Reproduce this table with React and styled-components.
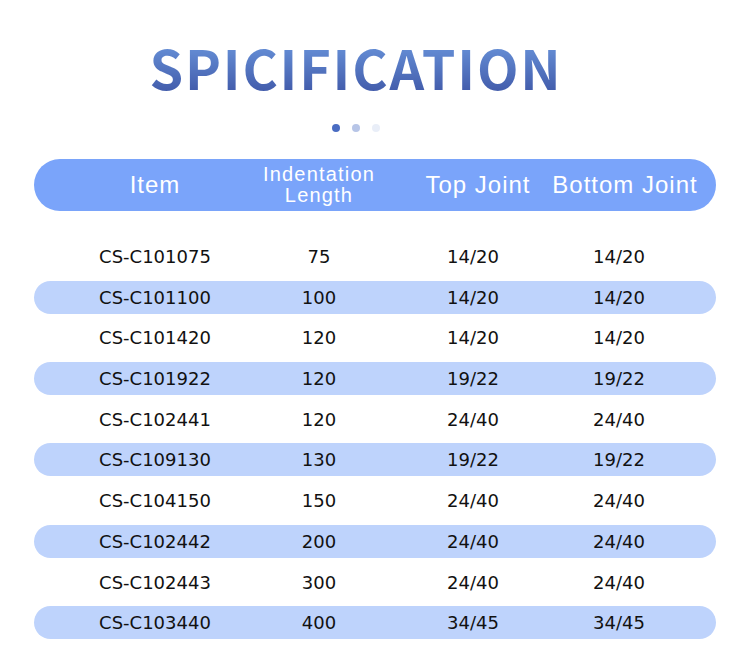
import React from 'react'
import styled, { createGlobalStyle } from 'styled-components'

const GlobalStyle = createGlobalStyle`
  body {
    margin: 0;
    background: #ffffff;
  }
`

const rows = [
  ['CS-C101075', '75', '14/20', '14/20'],
  ['CS-C101100', '100', '14/20', '14/20'],
  ['CS-C101420', '120', '14/20', '14/20'],
  ['CS-C101922', '120', '19/22', '19/22'],
  ['CS-C102441', '120', '24/40', '24/40'],
  ['CS-C109130', '130', '19/22', '19/22'],
  ['CS-C104150', '150', '24/40', '24/40'],
  ['CS-C102442', '200', '24/40', '24/40'],
  ['CS-C102443', '300', '24/40', '24/40'],
  ['CS-C103440', '400', '34/45', '34/45'],
]

const App = () => {
  return (
    <Page>
      <GlobalStyle />
      <Title>SPICIFICATION</Title>
      <Dots>
        <Dot $color='#4a6cc2' />
        <Dot $color='#b7c5e7' />
        <Dot $color='#e9eef8' />
      </Dots>
      <Table>
        <HeadRow>
          <HeadCell>Item</HeadCell>
          <HeadCell $small>
            Indentation
            <br />
            Length
          </HeadCell>
          <HeadCell $shift='5px'>Top Joint</HeadCell>
          <HeadCell $shift='6px'>Bottom Joint</HeadCell>
        </HeadRow>
        <Body>
          {rows.map((item, itemIndex) => (
            <Row key={itemIndex} $striped={itemIndex % 2 === 1}>
              {item.map((cell, cellIndex) => (
                <Cell key={cellIndex}>{cell}</Cell>
              ))}
            </Row>
          ))}
        </Body>
      </Table>
    </Page>
  )
}

const Page = styled.div`
  width: 750px;
  height: 670px;
  padding-top: 37px;
  box-sizing: border-box;
  overflow: hidden;
`

const Title = styled.h1`
  margin: 0 38px 0 0;
  text-align: center;
  font-family: 'Noto Sans CJK SC', 'Noto Sans', sans-serif;
  font-weight: 700;
  font-size: 54px;
  line-height: 60px;
  letter-spacing: 1.8px;
  background: linear-gradient(180deg, #6c98de 0%, #3e56a6 100%);
  -webkit-background-clip: text;
  background-clip: text;
  color: transparent;
`

const Dots = styled.div`
  display: flex;
  justify-content: center;
  gap: 12px;
  margin: 27px 38px 0 0;
`

const Dot = styled.span`
  width: 8px;
  height: 8px;
  border-radius: 50%;
  background: ${(p) => p.$color};
`

const Table = styled.div`
  margin: 27px 34px 0;
`

const grid = `
  display: grid;
  grid-template-columns: 160px 168px 140px 152px;
  padding-left: 41px;
  align-items: center;
`

const HeadRow = styled.div`
  ${grid}
  height: 52px;
  border-radius: 26px;
  background: #7aa4fa;
`

const HeadCell = styled.div`
  text-align: center;
  color: #ffffff;
  font-family: 'Liberation Sans', Arial, sans-serif;
  font-size: ${(p) => (p.$small ? '20px' : '24px')};
  line-height: ${(p) => (p.$small ? '21px' : '28px')};
  letter-spacing: ${(p) => (p.$small ? '1.2px' : '1px')};
  white-space: nowrap;
  transform: translateX(${(p) => p.$shift || '0px'});
`

const Body = styled.div`
  display: flex;
  flex-direction: column;
  gap: 7.7px;
  margin-top: 29px;
`

const Row = styled.div`
  ${grid}
  height: 33px;
  border-radius: 17px;
  background: ${(p) => (p.$striped ? '#bed3fc' : 'transparent')};
`

const Cell = styled.div`
  text-align: center;
  color: #111111;
  font-family: 'DejaVu Sans', sans-serif;
  font-size: 18px;
`

export default App
